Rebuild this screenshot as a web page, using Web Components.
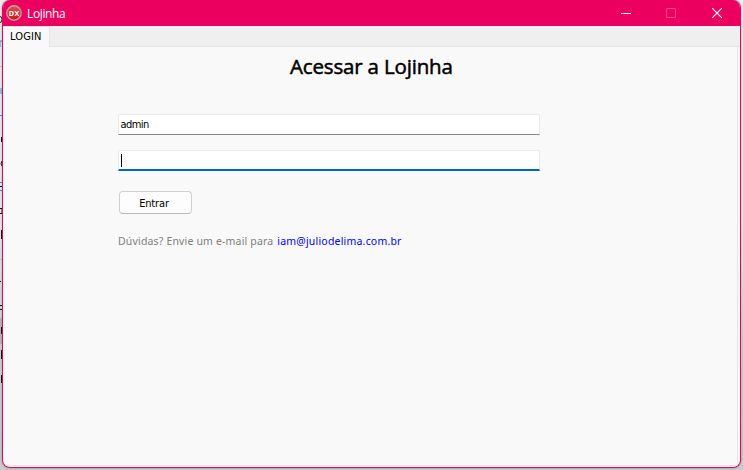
<!DOCTYPE html>
<html lang="pt-BR"><head><meta charset="utf-8"><title>Lojinha</title>
<style>html,body{margin:0;width:743px;height:470px;overflow:hidden;background:#e3e3e3}</style></head>
<body>
<app-desktop><app-window><title-bar slot="bar">Lojinha</title-bar><login-panel></login-panel></app-window></app-desktop>
<script>
const define=(name,html)=>customElements.define(name,class extends HTMLElement{
 constructor(){super();this.attachShadow({mode:'open'}).innerHTML=html;}
});
define('app-desktop',`<style>
:host{display:grid;grid-template:470px/2px 739px 2px;width:743px;height:470px;background:linear-gradient(#efefef 0,#eee 45%,#d6d6d6 70%,#cbcbcb);overflow:hidden}
.edge{position:absolute;left:0;top:0;width:8px;height:470px}
.edge svg{display:block}
.main{grid-column:2;position:relative;height:468px}
</style><div class="edge"><svg width="8" height="470" fill="none" stroke="#111">
<path d="M0 66.500h3M0 259.500h3" stroke="#c8c8c8"/>
<path d="M0 318h3v26H0z" fill="#b9b9b9" stroke="none"/>
<path d="M0 16.500q2 0 2 3t-2 3M1.500 137v5M2 161q-2 3 0 5M0 186.500h3M0 208.500h2v5H0M1.500 230v9M0 281.500h1M0 305.500h3M0 309.500h3M1.500 327v7M1.500 350v9M1.500 375v8"/>
<path d="M0 47V41h3M1 88v6M0 115.500h3M0 182.500h3M0 190.500h3" stroke="#3c9bd8"/></svg></div>
<div class="main"><slot></slot></div>`);
define('app-window',`<style>
:host{display:flex;flex-direction:column;box-sizing:border-box;width:739px;height:468px;border:1px solid #ec005f;border-top:0;border-radius:8px;background:#f9f9f9;overflow:hidden;box-shadow:0 0 3px #0004}
</style><slot name="bar"></slot><slot></slot>`);
define('title-bar',`<style>
:host{display:flex;align-items:center;flex:none;box-sizing:border-box;height:26px;padding-left:3px;background:#ec005f;color:#fff;font:12px "Open Sans","Noto Sans",sans-serif}
.name{margin-left:5px;flex:1;line-height:26px;padding-top:1px;letter-spacing:-.36px}
.controls{display:block}
</style><svg width="16" height="16" viewBox="0 0 16 16"><defs><linearGradient id="g" x2="0" y2="1"><stop stop-color="#e85050"/><stop offset="1" stop-color="#c5171c"/></linearGradient></defs><circle cx="8" cy="8" r="7.200" fill="url(#g)" stroke="#b9a39d" stroke-width="1.400"/><text x="8" y="10.600" text-anchor="middle" fill="#fff" font-family="Open Sans,sans-serif" font-size="7.200" font-weight="700" textLength="10.500">DX</text></svg>
<span class="name"><slot></slot></span>
<svg class="controls" width="129" height="26" fill="none" stroke="#fff"><path d="M10 13.500h10"/><rect x="55.500" y="8.500" width="9" height="9" rx=".5" stroke="#f54a8b"/><path d="M101.200 8.200l9.600 9.600M110.800 8.200l-9.600 9.600" stroke-width="1.100"/></svg>`);
define('text-field',`<style>
:host{display:block;box-sizing:border-box;width:422px;height:21px;background:#fff;border:1px solid #e8e8e8;border-bottom-color:#858585;border-radius:2px 2px 0 0;padding-left:1.500px;color:#000;font:11px/19px "DejaVu Sans Condensed","DejaVu Sans",sans-serif;font-stretch:condensed;letter-spacing:-.55px}
:host([focused]){border-bottom:2px solid #0067c0;padding-left:2px}
.caret{display:none;width:1px;height:13px;margin-top:3px;background:#000}
:host([focused]) .caret{display:block}
</style><slot></slot><div class="caret"></div>`);
define('push-button',`<style>
:host{display:block;box-sizing:border-box;width:73px;height:23px;border:1px solid #d0d0d0;border-bottom-color:#bababa;border-radius:4px;background:#fdfdfd;text-align:center;color:#000;font:11px/23px "DejaVu Sans Condensed","DejaVu Sans",sans-serif;font-stretch:condensed;letter-spacing:-.15px;text-indent:-3px}
</style><slot></slot>`);
define('login-panel',`<style>
:host{display:flex;flex-direction:column;flex:1}
.tabs{height:21px;flex:none;display:flex;background:#efefef}
.tab{box-sizing:border-box;width:47px;height:21px;padding-left:7px;border-right:1px solid #e5e5e5;border-top:1px solid #e5e5e5;background:#f9f9f9;color:#000;font:11px/19px "DejaVu Sans Condensed","DejaVu Sans",sans-serif;font-stretch:condensed;letter-spacing:.15px}
.rest{flex:1;box-sizing:border-box;border-bottom:1px solid #e5e5e5}
.page{flex:1;box-sizing:border-box;margin:0 2px 1px 0;border-right:1px solid #e5e5e5;border-bottom:1px solid #e5e5e5;padding:4px 0 0 115px}
h1{margin:0 0 0 172px;height:63px;font:400 20.500px/30px "Open Sans","Noto Sans",sans-serif;letter-spacing:-.17px;-webkit-text-stroke:.5px #000;color:#000;white-space:nowrap}
text-field+text-field{margin-top:15px}
push-button{margin:20px 0 0 1px}
p{margin:18px 0 0;white-space:nowrap;color:#808080;font:10.500px/18px "Noto Sans",sans-serif;letter-spacing:.17px}
a{color:#00f;margin-left:1px;letter-spacing:.2px}
</style><div class="tabs"><div class="tab">LOGIN</div><div class="rest"></div></div>
<div class="page"><h1>Acessar a Lojinha</h1><text-field>admin</text-field><text-field focused></text-field><push-button>Entrar</push-button><p>Dúvidas? Envie um e-mail para <a>iam@juliodelima.com.br</a></p></div>`);
</script></body></html>
